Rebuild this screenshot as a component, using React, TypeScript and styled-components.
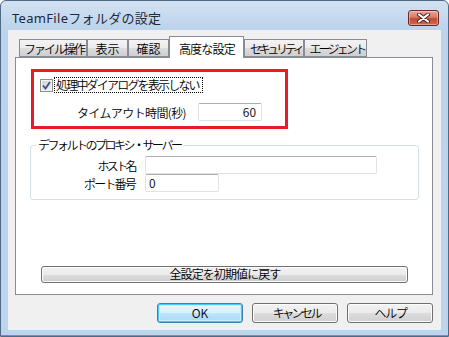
import React from 'react';
import styled, { createGlobalStyle } from 'styled-components';

const GlobalStyle = createGlobalStyle`
  html, body { margin: 0; padding: 0; background: #ffffff; }
  * { box-sizing: border-box; }
`;

const uiFont = `"Noto Sans CJK JP", "Noto Sans", sans-serif`;

const Window = styled.div`
  width: 449px;
  height: 337px;
  border: 1px solid #4f6a88;
  border-radius: 6px 6px 0 0;
  background: linear-gradient(#d3e2f2, #bcd3eb 28px, #bdd4ec);
  box-shadow: inset 0 -1px 0 #3aa9d8;
  padding: 0 7px 6px;
  display: flex;
  flex-direction: column;
  font-family: ${uiFont};
  font-weight: 350;
  color: #000;
`;

const TitleBar = styled.div`
  height: 29px;
  padding: 4px 2px 0 4px;
  display: flex;
  align-items: center;
`;

const Title = styled.span`
  font-family: "Noto Sans", "Noto Sans CJK JP", sans-serif;
  font-size: 13px;
  font-weight: 400;
  letter-spacing: 0.3px;
  color: #1b2a3c;
`;

const CloseButton = styled.div`
  margin-left: auto;
  width: 31px;
  height: 16px;
  border: 1px solid #6a2a22;
  border-radius: 3px;
  background: linear-gradient(#e9a99b, #d47a68 45%, #c24a37 55%, #d06a4c);
  box-shadow: inset 0 0 0 1px rgba(255, 220, 210, 0.45);
  display: flex;
  align-items: center;
  justify-content: center;
`;

const Content = styled.div`
  flex: 1;
  background: #f0f0f0;
  padding: 6px 8px 0 7px;
  display: flex;
  flex-direction: column;
`;

const TabStrip = styled.div`
  display: flex;
  align-items: flex-start;
  height: 22px;
  padding-left: 4px;
  position: relative;
  z-index: 1;
`;

const Tab = styled.div<{ $w: number; $ls: number; $active?: boolean }>`
  width: ${(p) => p.$w}px;
  height: ${(p) => (p.$active ? 22 : 18)}px;
  margin-top: ${(p) => (p.$active ? 0 : 3)}px;
  border: 1px solid #898c95;
  border-bottom: ${(p) => (p.$active ? 'none' : '1px solid #898c95')};
  background: ${(p) =>
    p.$active ? '#ffffff' : 'linear-gradient(#f3f3f3, #ebebeb 50%, #dddddd 50%, #cfcfcf)'};
  font-size: 12px;
  letter-spacing: ${(p) => p.$ls}px;
  text-indent: ${(p) => -p.$ls}px;
  line-height: ${(p) => (p.$active ? 19 : 15)}px;
  padding-top: ${(p) => (p.$active ? 2 : 1)}px;
  text-align: center;
  white-space: nowrap;
  overflow: hidden;
`;

const Panel = styled.div`
  height: 238px;
  margin-top: -1px;
  background: #ffffff;
  border: 1px solid #898c95;
  display: flex;
  flex-direction: column;
  align-items: flex-start;
  padding-bottom: 11px;
`;

const Highlight = styled.div`
  margin: 11px 0 0 15px;
  width: 257px;
  height: 60px;
  border: 3px solid #e81c24;
  display: flex;
  flex-direction: column;
`;

const CheckRow = styled.label`
  margin: 5px 0 0 6px;
  height: 16px;
  display: flex;
  align-items: center;
  gap: 1px;
`;

const CheckBox = styled.span`
  width: 13px;
  height: 13px;
  border: 1px solid #8e8f8f;
  background: linear-gradient(135deg, #cfd0d1, #f4f4f4);
  box-shadow: inset 0 0 0 1px #f4f4f4;
  display: flex;
  align-items: center;
  justify-content: center;
`;

const FocusLabel = styled.span`
  font-size: 12px;
  letter-spacing: -1.8px;
  line-height: 14px;
  padding: 0 3px 0 1px;
  border: 1px dotted #000;
  white-space: nowrap;
`;

const Row = styled.div<{ $labelW: number; $gap: number }>`
  display: grid;
  grid-template-columns: ${(p) => p.$labelW}px auto;
  column-gap: ${(p) => p.$gap}px;
  align-items: center;
`;

const TimeoutRow = styled(Row)`
  margin: 10px 0 0 6px;
`;

const FieldLabel = styled.span<{ $ls: number }>`
  font-size: 12px;
  letter-spacing: ${(p) => p.$ls}px;
  text-align: right;
  white-space: nowrap;
`;

const TextInput = styled.div<{ $w: number; $right?: boolean }>`
  width: ${(p) => p.$w}px;
  height: 18px;
  border: 1px solid #dfe3e8;
  border-top-color: #abadb3;
  border-radius: 2px;
  background: #fff;
  font-size: 12px;
  line-height: 16px;
  padding: 0 5px 0 3px;
  text-align: ${(p) => (p.$right ? 'right' : 'left')};
`;

const GroupBox = styled.fieldset`
  margin: 8px 0 0 14px;
  width: 389px;
  border: 1px solid #d5dfe5;
  border-radius: 3px;
  padding: 3px 0 7px 0;
  min-width: 0;
  display: flex;
  flex-direction: column;
`;

const Legend = styled.legend`
  margin-left: 5px;
  padding: 0 4px 0 2px;
  font-size: 12px;
  letter-spacing: -2.5px;
  line-height: 16px;
`;

const GroupRows = styled.div`
  display: flex;
  flex-direction: column;
`;

const PushButton = styled.div<{ $w: number; $ls?: number; $h?: number; $default?: boolean }>`
  width: ${(p) => p.$w}px;
  height: ${(p) => p.$h ?? 20}px;
  border: 1px solid ${(p) => (p.$default ? '#3c7fb1' : '#707070')};
  border-radius: 3px;
  background: ${(p) =>
    p.$default
      ? 'linear-gradient(#eaf6fd, #d9f0fc 50%, #bee6fd 50%, #a7d9f5)'
      : 'linear-gradient(#f2f2f2, #ebebeb 50%, #dddddd 50%, #cfcfcf)'};
  box-shadow: ${(p) =>
    p.$default ? 'inset 0 0 0 1px #48c8f4, inset 0 0 0 2px #c8ecfb' : 'inset 0 0 0 1px #fcfcfc'};
  font-size: 12px;
  letter-spacing: ${(p) => p.$ls ?? 0}px;
  text-indent: ${(p) => -(p.$ls ?? 0)}px;
  line-height: ${(p) => (p.$h ?? 20) - 3}px;
  text-align: center;
  white-space: nowrap;
`;

const ResetButton = styled(PushButton)`
  margin: auto 0 0 25px;
`;

const ButtonRow = styled.div`
  margin-top: 8px;
  display: flex;
  justify-content: flex-end;
  gap: 9px;
`;

const tabs = [
  { label: 'ファイル操作', w: 68, ls: -2 },
  { label: '表示', w: 41, ls: 0 },
  { label: '確認', w: 41, ls: 0 },
  { label: '高度な設定', w: 75, ls: -0.8, active: true },
  { label: 'セキュリティ', w: 60, ls: -3.3 },
  { label: 'エージェント', w: 63, ls: -2.8 },
];

export default function App() {
  return (
    <>
      <GlobalStyle />
      <Window>
        <TitleBar>
          <Title>TeamFileフォルダの設定</Title>
          <CloseButton>
            <svg width="13" height="10" viewBox="0 0 13 10">
              <path d="M2 1.5 L11 8.5 M11 1.5 L2 8.5" stroke="#4a2420" strokeWidth="4" strokeLinecap="round" />
              <path d="M2 1.5 L11 8.5 M11 1.5 L2 8.5" stroke="#ffffff" strokeWidth="2.2" strokeLinecap="round" />
            </svg>
          </CloseButton>
        </TitleBar>
        <Content>
          <TabStrip>
            {tabs.map((t) => (
              <Tab key={t.label} $w={t.w} $ls={t.ls} $active={t.active}>
                {t.label}
              </Tab>
            ))}
          </TabStrip>
          <Panel>
            <Highlight>
              <CheckRow>
                <CheckBox>
                  <svg width="9" height="9" viewBox="0 0 9 9">
                    <path d="M1 4.5 L3.5 7.5 L8 1" fill="none" stroke="#3b4f8e" strokeWidth="1.8" />
                  </svg>
                </CheckBox>
                <FocusLabel>処理中ダイアログを表示しない</FocusLabel>
              </CheckRow>
              <TimeoutRow $labelW={146} $gap={12}>
                <FieldLabel $ls={-0.6}>タイムアウト時間(秒)</FieldLabel>
                <TextInput $w={64} $right>
                  60
                </TextInput>
              </TimeoutRow>
            </Highlight>
            <GroupBox>
              <Legend>デフォルトのプロキシ・サーバー</Legend>
              <GroupRows>
                <Row $labelW={104} $gap={10}>
                  <FieldLabel $ls={-2.6}>ホスト名</FieldLabel>
                  <TextInput $w={232} />
                </Row>
                <Row $labelW={104} $gap={10}>
                  <FieldLabel $ls={-1.8}>ポート番号</FieldLabel>
                  <TextInput $w={74}>0</TextInput>
                </Row>
              </GroupRows>
            </GroupBox>
            <ResetButton $w={367} $h={17} $ls={-0.9}>
              全設定を初期値に戻す
            </ResetButton>
          </Panel>
          <ButtonRow>
            <PushButton $w={86} $default>
              OK
            </PushButton>
            <PushButton $w={86} $ls={-2.6}>
              キャンセル
            </PushButton>
            <PushButton $w={86} $ls={-1.3}>
              ヘルプ
            </PushButton>
          </ButtonRow>
        </Content>
      </Window>
    </>
  );
}
